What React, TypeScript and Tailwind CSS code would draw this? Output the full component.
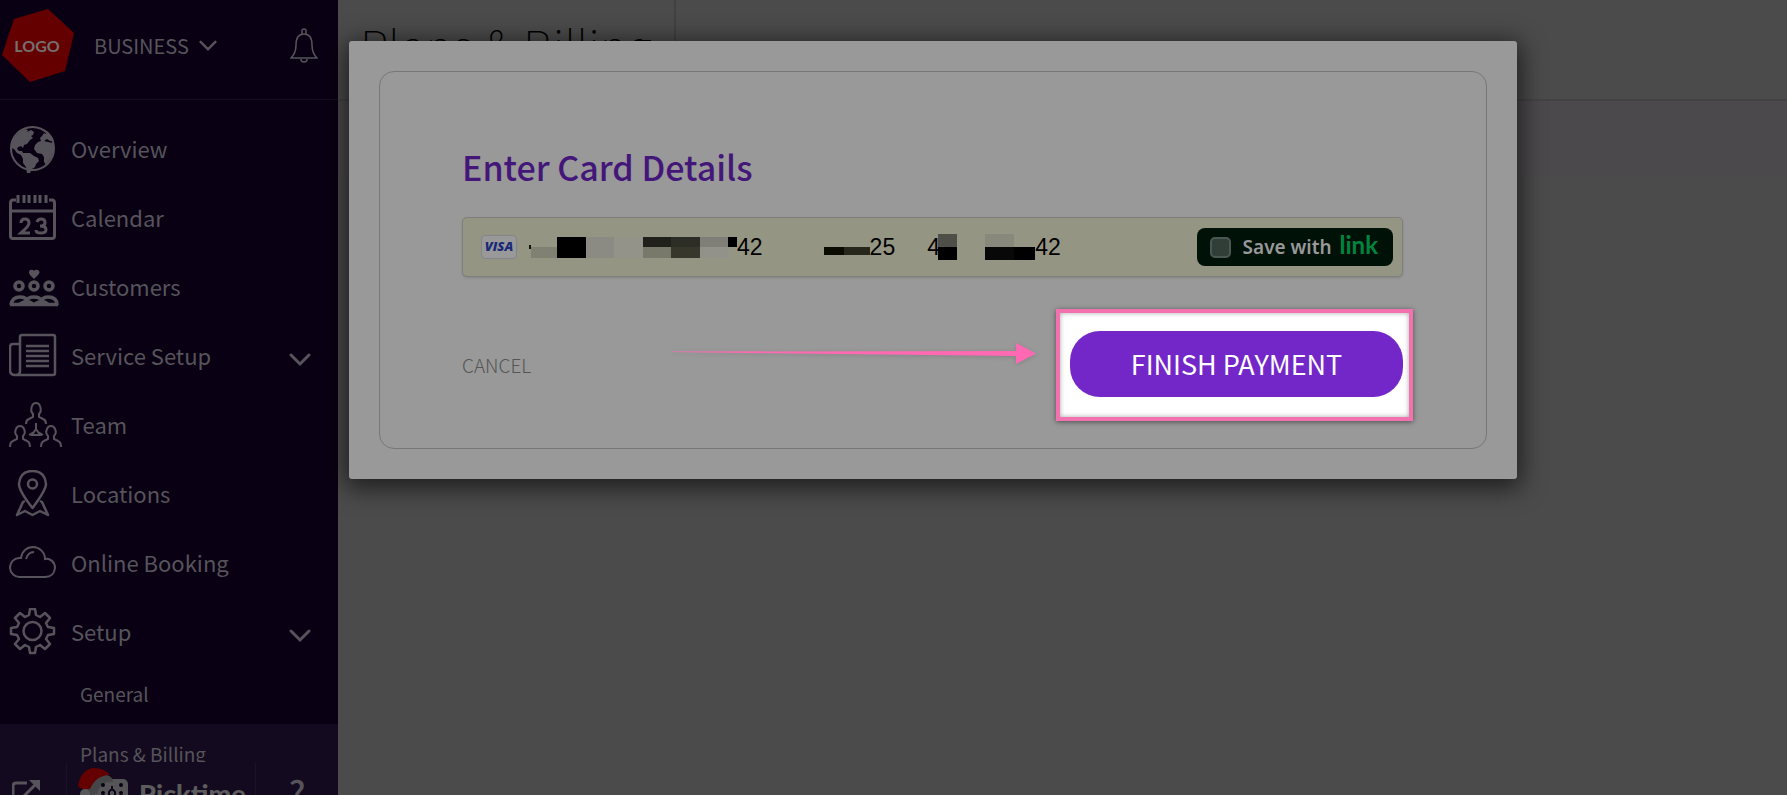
import { useState } from 'react';
import type { ReactNode } from 'react';

function GlobeIcon() {
    return (
        <svg className="w-12 h-12" viewBox="0 0 48 48" fill="none">
            <circle cx="23.5" cy="23.5" r="21.5" stroke="currentColor" strokeWidth="2" />
            <path fill="currentColor" d="M3 19Q5 11 11 7l5-3 3 1-1 2 4-2 3 2-1 3-2 1 2 2-3 2-3 4-3 1-1 3-2-2-3 1-1 2 2 2 3 0 1 2 3 0 4 0 4 3 4 2 1 3-3 3-1 3-3 2-2 4-1 2-2-2-1-6-3-4 0-4-2-4-4-2-3-4-3-1z" />
            <path fill="currentColor" d="M33 11l2-3 2 1 1-3q5 4 7 10l-4 0-3-2-3 2 4 1 5 1q1 5 0 10l-2 5-3 4-2 3-2-3 0-5-2-3-5-1-3-4 1-4 3-3 3-1-1-3z" />
        </svg>
    );
}

function CalendarIcon() {
    return (
        <svg className="w-12 h-12" viewBox="0 0 48 48" fill="none" stroke="currentColor" strokeWidth="3">
            <path d="M7 6H4q-2.500 0-2.500 3v33q0 2.500 2.500 2.500h39q2.500 0 2.500-2.500V9q0-3-2.500-3h-3M2 17h43" />
            <path d="M9 1v8m6-8v8m5-8v8m6-8v8m5-8v8m6-8v8" />
            <path strokeWidth="3" d="M12 29q0-4 4-4t4 4q0 3-8 10h9M28 28q1-3 4-3 4 0 4 3.500T31 32q6 0 6 3.500t-5 3.500-5-3" />
        </svg>
    );
}

function CustomersIcon() {
    return (
        <svg className="w-[50px] h-12" viewBox="0 0 50 48" fill="none" stroke="currentColor" strokeWidth="3.500">
            <circle cx="10" cy="23" r="4" />
            <circle cx="25" cy="23" r="4" />
            <circle cx="40" cy="23" r="4" />
            <path d="M2 42q1-8 9-8 6 0 7 4M17 38q2-4 8-4t8 4M32 38q2-4 7-4 9 0 9 8M11 41q7-5 13 0M26 41q7-5 13 0M1 41.500h48" />
            <path fill="currentColor" stroke="none" d="M25 16l-4-4q-2-3 0-5 3-1 4 1 1-2 4-1 3 2 0 5z" />
        </svg>
    );
}

function ServiceIcon() {
    return (
        <svg className="w-12 h-12" viewBox="0 0 48 48" fill="none" stroke="currentColor" strokeWidth="2.500">
            <path d="M11 39V5q0-2 2-2h31q2 0 2 2v36q0 2-2 2H6q-5 0-5-5V15q0-3 3-3h7v27q0 4-4 4" />
            <path d="M17 14h23M17 19h23M17 24h23M17 29h23M17 34h23" />
        </svg>
    );
}

function TeamIcon() {
    return (
        <svg className="w-[54px] h-12" viewBox="0 0 54 48" fill="none" stroke="currentColor" strokeWidth="2">
            <path d="M17 23q0-4 3-5l4-2v-3q-3-3-1-8 1-3 4-3t4 3q2 5-1 8v3l4 2q3 1 3 5" />
            <path d="M1 46q0-5 3-6l4-2v-3q-3-3-1-7 1-3 4-3t4 3q2 4-1 7v3l4 2q3 1 3 6" />
            <path d="M32 46q0-5 3-6l4-2v-3q-3-3-1-7 1-3 4-3t4 3q2 4-1 7v3l4 2q3 1 3 6" />
            <path d="M27 22v8M20 34l5-3M34 34l-5-3M27 28l-4 6h8z" />
        </svg>
    );
}

function LocationIcon() {
    return (
        <svg className="w-12 h-12" viewBox="0 0 48 48" fill="none" stroke="currentColor" strokeWidth="2.500" strokeLinejoin="round">
            <path d="M23.500 38Q10 21 10 14 11 1 23.500 1T37 14q0 6-13.500 24z" />
            <circle cx="23.500" cy="14" r="4.500" />
            <path d="M16 31l-2 1-6 13 8-4 7.500 4 7.500-4 8 4-6-13-2-1" />
        </svg>
    );
}

function CloudIcon() {
    return (
        <svg className="w-12 h-12" viewBox="0 0 48 48" fill="none" stroke="currentColor" strokeWidth="2">
            <path d="M11 38a9 9 0 0 1-1-19h2C13 12 18 8 24 8s12 5 12 12c5-1 10 3 10 9q-1 9-10 9z" />
            <path d="M17 20q2-7 8-7" />
        </svg>
    );
}

function GearIcon() {
    return (
        <svg className="w-12 h-12" viewBox="0 0 48 48" fill="none" stroke="currentColor" strokeWidth="2.500" strokeLinejoin="round">
            <path d="M20 7l1-6h5l1 6 4 2 5-4 5 5-4 5 2 4 6 1v6l-6 1-2 4 4 5-5 5-5-4-4 2-1 6h-5l-1-6-4-2-5 4-5-5 4-5-2-4-6-1v-6l6-1 2-4-4-5 5-5 5 4z" />
            <circle cx="23.500" cy="23" r="9" />
        </svg>
    );
}

function Chevron({ className }: { className: string }) {
    return (
        <svg className={className} viewBox="0 0 22 14" fill="none" stroke="currentColor" strokeWidth="3" strokeLinecap="round">
            <path d="M2 2l9 9 9-9" />
        </svg>
    );
}

const menu: { label: string; icon: ReactNode; expandable?: boolean }[] = [
    { label: 'Overview', icon: <GlobeIcon /> },
    { label: 'Calendar', icon: <CalendarIcon /> },
    { label: 'Customers', icon: <CustomersIcon /> },
    { label: 'Service Setup', icon: <ServiceIcon />, expandable: true },
    { label: 'Team', icon: <TeamIcon /> },
    { label: 'Locations', icon: <LocationIcon /> },
    { label: 'Online Booking', icon: <CloudIcon /> },
    { label: 'Setup', icon: <GearIcon />, expandable: true },
];

function Sidebar() {
    return (
        <aside className="flex flex-col w-[338px] shrink-0 h-screen bg-[#0a0014] text-[#56545a]">
            {/* Business switcher */}
            <div className="flex items-center h-[100px] pb-2 shrink-0 border-b border-[#15101f]">
                <svg className="w-[74px] h-[74px]" viewBox="0 0 74 74">
                    <path fill="#650000" d="M14 10l34-10 26 24-9 38-35 11-28-27z" />
                    <text x="37" y="43" textAnchor="middle" fontSize="16" fontWeight="700" fontFamily="Lato, sans-serif" fill="#757070">LOGO</text>
                </svg>
                <button className="flex items-center gap-[10px] ml-5 text-xl">
                    BUSINESS
                    <Chevron className="w-[18px] h-3" />
                </button>
                <button aria-label="Notifications" className="ml-auto mr-5">
                    <svg className="w-7 h-9" viewBox="0 0 28 36" fill="none" stroke="currentColor" strokeWidth="1.500">
                        <path d="M12 6V2q2-2 4 0v4M1 30q5-5 5-13 0-11 8-11t8 11q0 8 5 13zM11 31q0 3 3 3t3-3" />
                    </svg>
                </button>
            </div>

            {/* Menu */}
            <nav className="flex-1 overflow-hidden pt-[14px]">
                {menu.map((item) => (
                    <a key={item.label} href="#" className="flex items-center h-[69px] pl-[9px] pr-[27px] text-[22px]">
                        <span className="w-[62px] shrink-0">{item.icon}</span>
                        {item.label}
                        {item.expandable && <Chevron className="w-[22px] h-[14px] ml-auto mt-2" />}
                    </a>
                ))}
                <a href="#" className="flex items-center h-[58px] pl-20 pb-[2px] text-[19px]">General</a>
                <a href="#" className="flex items-center h-[60px] pl-20 text-[19px] bg-[#130a1f]">Plans &amp; Billing</a>
            </nav>

            {/* Footer */}
            <div className="flex h-[33px] shrink-0 overflow-hidden bg-[#130a1f]">
                <a href="#" aria-label="Open in new tab" className="w-[67px] pl-3 pt-[18px] border-r border-[#1b1228]">
                    <svg className="w-7 h-7" viewBox="0 0 28 28" fill="none" stroke="currentColor" strokeWidth="3">
                        <path d="M15 3H4q-3 0-3 3v18q0 3 3 3h17q3 0 3-3v-9M9 19L24 4" />
                        <path fill="currentColor" stroke="none" d="M17 0h11v11z" />
                    </svg>
                </a>
                <a href="#" className="flex w-[189px] pl-[10px] pt-1 border-r border-[#1b1228] text-[#5c5c5c]">
                    <svg className="w-14 h-14 shrink-0" viewBox="0 0 56 56">
                        <path d="M8 27Q12 6 31 10q6 3 5 9L16 30z" fill="#454647" />
                        <rect x="18" y="13" width="33" height="34" rx="5" fill="#555558" />
                        <path d="M10 24Q12 6 30 9q6 2 6 7-12-2-16 12z" fill="#454647" />
                        <path d="M1 20Q4 3 17 2q10 0 16 7-14 0-20 14-5 1-10-1z" fill="#650000" />
                        <circle cx="8" cy="28" r="5" fill="#5a5a5a" />
                        <circle cx="26" cy="19" r="2" fill="#0a0014" />
                        <circle cx="44" cy="19" r="2" fill="#0a0014" />
                        <circle cx="26" cy="27" r="2" fill="#0a0014" />
                        <circle cx="44" cy="27" r="2" fill="#0a0014" />
                        <path d="M32 31v-5q3-5 6 0v5M35 20v4" fill="none" stroke="#0a0014" strokeWidth="2" />
                    </svg>
                    <span className="pl-[6px] pt-[10px] text-[27px] leading-9 font-black font-[Lato,sans-serif]">Picktime</span>
                </a>
                <button aria-label="Help" className="flex-1 flex justify-center pt-3 text-[34px] leading-9 font-medium">?</button>
            </div>
        </aside>
    );
}

function Redaction({ className }: { className: string }) {
    return <span className={`block shrink-0 ${className}`} />;
}

function CardField() {
    const [saved, setSaved] = useState(false);

    return (
        <div className="flex items-center h-[60px] pl-[18px] pr-[9px] rounded-[5px] border border-[#7f7f7b] bg-[#959584] shadow-sm font-['Liberation_Sans',sans-serif] text-[23px] text-black">
            <span className="flex items-center justify-center w-9 h-6 rounded-sm border border-[#84848c] bg-[#999999] text-[13px] font-extrabold italic text-[#192a78] font-['Open_Sans',sans-serif]">
                VISA
            </span>
            <div className="flex items-center ml-3">
                <Redaction className="w-[2px] h-1 bg-[#111108]" />
                <Redaction className="w-[26px] h-[11px] mt-[11px] bg-[#818173]" />
                <Redaction className="w-[29px] h-[21px] bg-black" />
                <Redaction className="w-[28px] h-[21px] bg-[#8b8b84]" />
                <Redaction className="w-[29px] h-[21px] bg-[#939389]" />
                <Redaction className="w-[28px] h-[21px] bg-linear-to-b from-[#20211a] from-50% to-[#79796b] to-50%" />
                <Redaction className="w-[29px] h-[21px] bg-linear-to-b from-[#2c2d25] from-50% to-[#37382b] to-50%" />
                <Redaction className="w-[28px] h-[21px] bg-linear-to-b from-[#7f7f77] from-50% to-[#92928a] to-50%" />
                <Redaction className="w-[9px] h-[10px] mb-[11px] bg-black" />
                <span>42</span>
            </div>
            <div className="flex items-center ml-[61px]">
                <Redaction className="w-5 h-2 mt-2 bg-[#0b0c00]" />
                <Redaction className="w-[26px] h-2 mt-2 bg-[#27271b]" />
                <span>25</span>
            </div>
            <div className="flex items-center ml-8">
                <span className="w-[11px]">4</span>
                <Redaction className="relative w-[19px] h-[26px] bg-linear-to-b from-[#4f4f49] from-50% to-black to-50%" />
            </div>
            <div className="flex items-center ml-7">
                <Redaction className="w-[29px] h-[26px] bg-linear-to-b from-[#88887d] from-50% to-[#080808] to-50%" />
                <Redaction className="w-[21px] h-[13px] mt-[13px] bg-black" />
                <span>42</span>
            </div>
            <label className="flex items-center h-[38px] ml-auto pl-[13px] pr-[15px] rounded-lg bg-[#001108] font-['Noto_Sans',sans-serif] text-[19px] font-semibold text-[#999999]">
                <input
                    type="checkbox"
                    checked={saved}
                    onChange={(e) => setSaved(e.target.checked)}
                    className="appearance-none w-[21px] h-[21px] mr-3 rounded-[5px] border-2 border-[#4b5752] bg-[#303e37]"
                />
                Save with
                <span className="ml-2 mb-1 text-2xl leading-6 font-bold text-[#008440] font-[Lato,sans-serif]">link</span>
            </label>
        </div>
    );
}

export default function App() {
    return (
        <div className="relative flex h-screen overflow-hidden bg-[#4b4b4b] font-['Noto_Sans_CJK_SC',sans-serif]">
            <Sidebar />

            <main className="flex-1 min-w-0">
                <header className="flex h-[101px] border-b-2 border-[#434345]">
                    <h1 className="w-[338px] pl-[22px] pt-5 border-r-2 border-[#414141] text-[47px] leading-[50px] font-thin text-black whitespace-nowrap">
                        Plans &amp; Billing
                    </h1>
                </header>
                <div className="h-[75px] bg-[#4c494c]" />
            </main>

            {/* Payment dialog */}
            <div className="absolute inset-0 pt-[41px] pl-[349px] pr-[270px]">
                <div role="dialog" aria-label="Enter Card Details" className="p-[30px] rounded-[3px] bg-[#999999] shadow-[0_5px_24px_4px_rgba(0,0,0,0.6)]">
                    <form className="h-[378px] pl-[82px] pr-[83px] pt-[69px] rounded-[15px] border border-[#777777]" onSubmit={(e) => e.preventDefault()}>
                        <h2 className="mb-6 text-[34px] leading-[52px] font-medium text-[#44167a]">Enter Card Details</h2>
                        <CardField />
                        <div className="flex items-center mt-8 -mr-[10px]">
                            <button type="button" className="text-[19px] font-light text-[#555555]">CANCEL</button>
                            <svg className="w-[364px] h-6 ml-auto mr-5 mb-6 overflow-visible drop-shadow-sm" viewBox="0 0 364 24">
                                <path fill="#ff69b4" d="M0 10.500L344 10V2l20 10.500L344 23v-8L0 11z" />
                            </svg>
                            <div className="pl-[10px] pr-[6px] pt-[18px] pb-5 border-4 border-[#f272b0] bg-white shadow-[0_1px_5px_rgba(0,0,0,0.5),inset_0_0_5px_rgba(0,0,0,0.35)]">
                                <button type="submit" className="w-[333px] h-[66px] rounded-[30px] bg-[#7427c8] text-[27px] text-white">
                                    FINISH PAYMENT
                                </button>
                            </div>
                        </div>
                    </form>
                </div>
            </div>
        </div>
    );
}
